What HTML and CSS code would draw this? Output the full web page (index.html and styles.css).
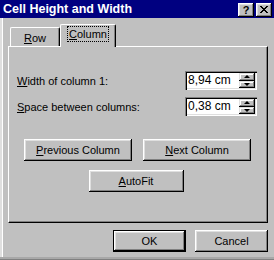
FILE: index.html
```html
<!DOCTYPE html>
<html>
<head>
<meta charset="utf-8">
<link rel="stylesheet" href="styles.css">
</head>
<body>
<div class="window">
  <div class="titlebar">
    <span class="title">Cell Height and Width</span>
    <div class="tb-buttons">
      <span class="tb-btn help">?</span>
      <span class="tb-btn close">
        <svg width="8" height="7" viewBox="0 0 8 7" shape-rendering="crispEdges"><path d="M0 0h2v1h-2zM6 0h2v1h-2zM1 1h2v1h-2zM5 1h2v1h-2zM2 2h4v1h-4zM3 3h2v1h-2zM2 4h4v1h-4zM1 5h2v1h-2zM5 5h2v1h-2zM0 6h2v1h-2zM6 6h2v1h-2z" fill="#000"/></svg>
      </span>
    </div>
  </div>
  <div class="content">
    <div class="tabs">
      <div class="tab"><u>R</u>ow</div>
      <div class="tab active"><span class="focus"><u>C</u>olumn</span></div>
    </div>
    <div class="panel">
      <div class="fields">
        <div class="field">
          <label><u>W</u>idth of column 1:</label>
          <div class="spin">
            <span class="val">8,94 cm</span>
            <div class="spin-btns">
              <span class="sbtn"><i class="up"></i></span>
              <span class="sbtn"><i class="down"></i></span>
            </div>
          </div>
        </div>
        <div class="field">
          <label><u>S</u>pace between columns:</label>
          <div class="spin">
            <span class="val">0,38 cm</span>
            <div class="spin-btns">
              <span class="sbtn"><i class="up"></i></span>
              <span class="sbtn"><i class="down"></i></span>
            </div>
          </div>
        </div>
      </div>
      <div class="btn-row">
        <button class="btn wide"><u>P</u>revious Column</button>
        <button class="btn wide"><u>N</u>ext Column</button>
      </div>
      <div class="btn-row second">
        <button class="btn auto"><u>A</u>utoFit</button>
      </div>
    </div>
    <div class="footer">
      <button class="btn foot default">OK</button>
      <button class="btn foot">Cancel</button>
    </div>
  </div>
</div>
</body>
</html>
```
FILE: styles.css
```css
html, body {
  margin: 0;
  padding: 0;
  background: #c0c0c0;
}
body {
  font-family: "Liberation Sans", Arial, sans-serif;
  font-size: 11px;
  color: #000;
}
.window {
  width: 274px;
  height: 260px;
  box-sizing: border-box;
  display: flex;
  flex-direction: column;
  border-bottom: 1px solid #808080;
  box-shadow: inset 0 -2px #a8a8a8, inset 2px 0 #dfdfdf, inset 3px 0 #fff;
}
.titlebar {
  height: 18px;
  background: #000080;
  color: #fff;
  display: flex;
  align-items: center;
  justify-content: space-between;
  padding: 0 2px 0 3px;
}
.title {
  font-weight: bold;
  font-size: 12.5px;
  line-height: 18px;
}
.tb-buttons {
  display: flex;
  gap: 2px;
  margin-top: 1px;
}
.tb-btn {
  width: 16px;
  height: 14px;
  box-sizing: border-box;
  background: #c0c0c0;
  color: #000;
  display: flex;
  align-items: center;
  justify-content: center;
  box-shadow: inset -1px -1px #000, inset 1px 1px #fff, inset -2px -2px #808080, inset 2px 2px #dfdfdf;
}
.tb-btn.help {
  font-weight: bold;
  font-size: 11px;
  line-height: 14px;
  padding-top: 1px;
}
.tb-btn svg { display: block; }
.content {
  flex: 1;
  display: flex;
  flex-direction: column;
  padding: 6px 6px 0 8px;
}
.tabs {
  display: flex;
  align-items: flex-end;
  height: 22px;
}
.tab {
  box-sizing: border-box;
  height: 19px;
  width: 50px;
  margin-left: 2px;
  border-top: 1px solid #fff;
  border-left: 1px solid #fff;
  border-right: 1px solid #000;
  border-radius: 2px 2px 0 0;
  box-shadow: inset -1px 0 #808080;
  display: flex;
  align-items: center;
  justify-content: center;
  padding-top: 2px;
}
.tab.active {
  width: 56px;
  height: 23px;
  margin-left: 0;
  margin-bottom: -1px;
  background: #c0c0c0;
  position: relative;
  z-index: 1;
  padding-top: 0;
  padding-bottom: 4px;
}
.focus {
  border: 1px dotted #000;
  padding: 1px 1px 1px 1px;
  line-height: 12px;
}
.panel {
  height: 177px;
  box-sizing: border-box;
  border-top: 1px solid #fff;
  border-left: 1px solid #fff;
  border-right: 1px solid #000;
  border-bottom: 1px solid #000;
  box-shadow: inset -1px -1px #808080;
  padding: 24px 10px 0 8px;
  display: flex;
  flex-direction: column;
}
.fields {
  display: flex;
  flex-direction: column;
  gap: 7px;
}
.field {
  display: flex;
  align-items: center;
  justify-content: space-between;
  height: 19px;
}
.spin {
  width: 72px;
  height: 19px;
  box-sizing: border-box;
  background: #fff;
  box-shadow: inset 1px 1px #808080, inset 2px 2px #000, inset -1px -1px #fff, inset -2px -2px #dfdfdf;
  display: flex;
  align-items: center;
  justify-content: space-between;
  padding: 2px 2px 2px 3px;
}
.val {
  font-size: 12px;
  line-height: 15px;
}
.spin-btns {
  display: flex;
  flex-direction: column;
  width: 16px;
  height: 15px;
}
.sbtn {
  flex: 1;
  background: #c0c0c0;
  box-shadow: inset -1px -1px #000, inset 1px 1px #dfdfdf, inset -2px -2px #808080, inset 2px 2px #fff;
  display: flex;
  align-items: center;
  justify-content: center;
}
.sbtn i {
  width: 0;
  height: 0;
  border-left: 3px solid transparent;
  border-right: 3px solid transparent;
}
.sbtn i.up { border-bottom: 3px solid #000; }
.sbtn i.down { border-top: 3px solid #000; }
.btn-row {
  display: flex;
  justify-content: center;
  gap: 11px;
  margin-top: 23px;
  padding-left: 1px;
}
.btn-row.second {
  margin-top: 9px;
  padding-left: 0;
  padding-right: 2px;
}
.btn {
  font-family: inherit;
  font-size: 11px;
  color: #000;
  height: 22px;
  box-sizing: border-box;
  background: #c0c0c0;
  border: none;
  padding: 0;
  box-shadow: inset -1px -1px #000, inset 1px 1px #fff, inset -2px -2px #808080, inset 2px 2px #dfdfdf;
}
.btn.wide { width: 108px; }
.btn.auto { width: 95px; }
.footer {
  display: flex;
  justify-content: flex-end;
  gap: 9px;
  margin-top: 7px;
}
.btn.foot { width: 73px; }
.btn.default {
  box-shadow: inset 0 0 0 1px #000, inset -2px -2px #000, inset 2px 2px #fff, inset -3px -3px #808080, inset 3px 3px #dfdfdf;
}
```
